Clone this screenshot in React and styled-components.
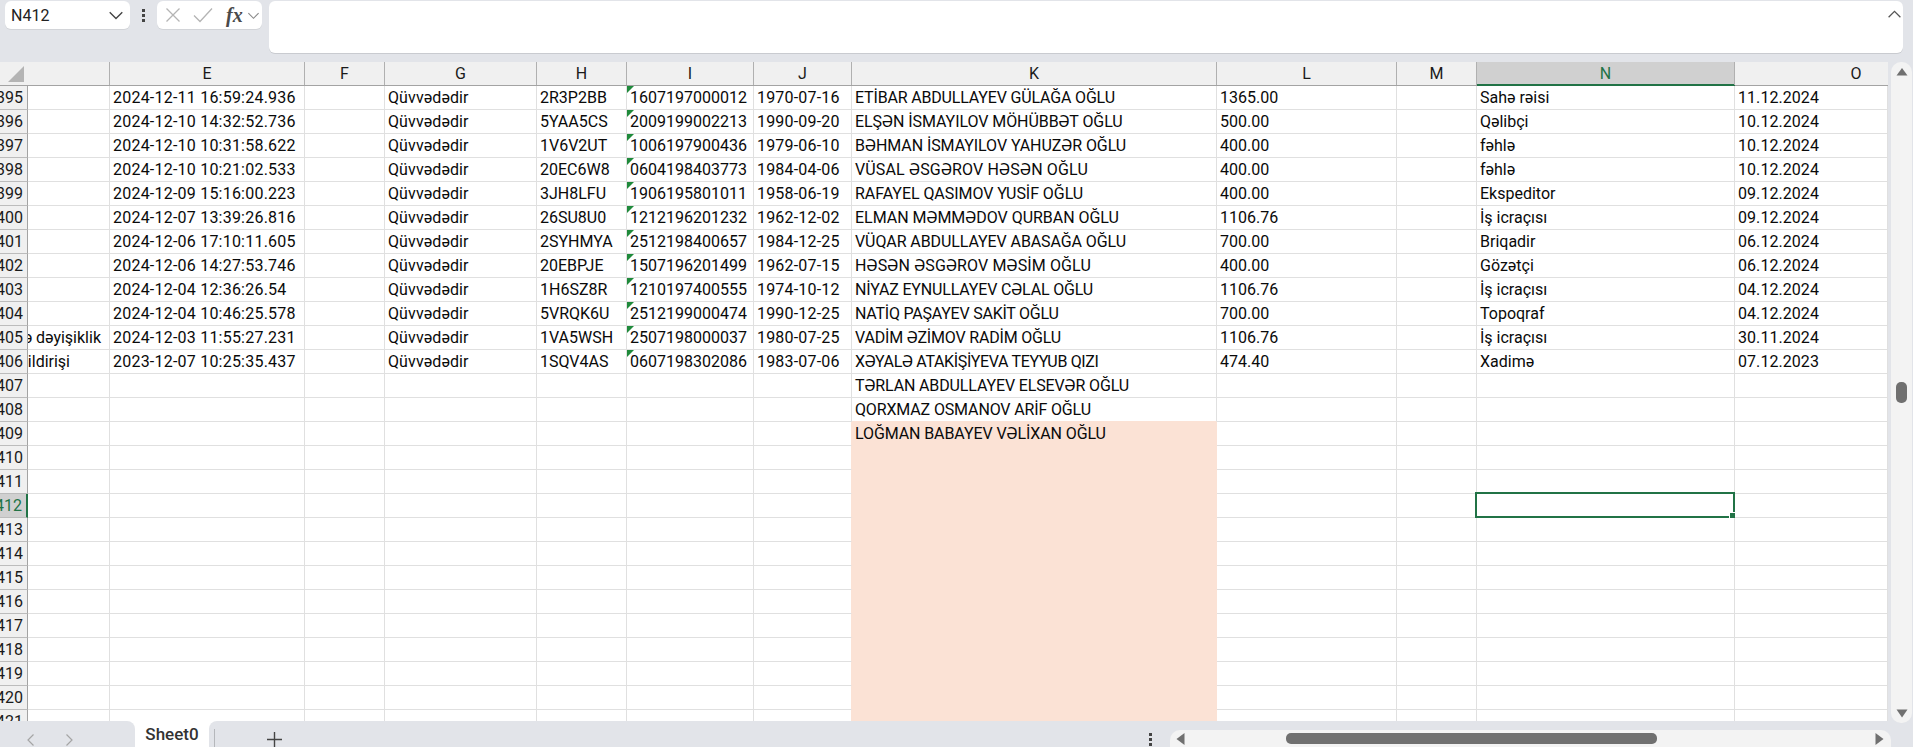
import React from "react";
import styled, { createGlobalStyle } from "styled-components";

const COLUMNS = "28px 82px 195px 80px 152px 90px 127px 98px 365px 180px 80px 258px 153px";
const CHROME = "#e2e4e9";
const GREEN = "#217346";
const PEACH = "#fbe2d5";
const GRIDLINE = "#e0e0e0";

const Global = createGlobalStyle`
  html, body { margin: 0; padding: 0; height: 100%; overflow: hidden; background: #fff; }
  * { box-sizing: border-box; }
`;

const Page = styled.div`
  width: 100vw;
  height: 100vh;
  display: flex;
  flex-direction: column;
  background: #fff;
  font-family: Roboto, "Liberation Sans", sans-serif;
  color: #0a0a0a;
  overflow: hidden;
`;

const FormulaBar = styled.div`
  height: 62px;
  flex: none;
  background: ${CHROME};
  display: flex;
  align-items: flex-start;
  padding: 1px 10px 0 5px;
`;
const NameBox = styled.div`
  width: 125px;
  height: 28px;
  background: #fff;
  border-radius: 6px;
  display: flex;
  align-items: center;
  justify-content: space-between;
  padding: 0 6px 0 6px;
  font-size: 16px;
  color: #222;
  box-shadow: 0 1px 0 #d2d4d8;
`;
const Dots = styled.div`
  width: 27px;
  height: 28px;
  display: flex;
  flex-direction: column;
  align-items: center;
  justify-content: center;
  gap: 2px;
`;
const Dot = styled.span`
  width: 3px;
  height: 3px;
  background: #444;
`;
const FxBox = styled.div`
  width: 105px;
  height: 28px;
  background: #fff;
  border-radius: 6px;
  display: flex;
  align-items: center;
  padding-left: 8px;
  box-shadow: 0 1px 0 #d2d4d8;
`;
const CheckIcon = styled.svg`
  flex: none;
  display: block;
  margin-left: 12px;
`;
const FxLabel = styled.span`
  font-family: "Liberation Serif", serif;
  font-style: italic;
  font-weight: 700;
  font-size: 20px;
  color: #4a4a4a;
  margin-left: 13px;
  margin-right: 4px;
`;
const FormulaInput = styled.div`
  margin-left: 7px;
  flex: 1;
  height: 52px;
  background: #fff;
  border-radius: 6px;
  box-shadow: 0 1px 0 #c9cbd0;
  display: flex;
  justify-content: flex-end;
  padding: 6px 1px 0 0;
`;
const Icon = styled.svg`
  flex: none;
  display: block;
`;

const SheetArea = styled.div`
  height: 659px;
  flex: none;
  display: flex;
  background: ${CHROME};
`;
const Grid = styled.div`
  width: 1888px;
  height: 659px;
  flex: none;
  background: #fff;
  overflow: hidden;
`;
const HeaderRow = styled.div`
  display: grid;
  grid-template-columns: 110px 195px 80px 152px 90px 127px 98px 365px 180px 80px 258px 153px;
  height: 24px;
  background: #f0f0f0;
  border-bottom: 1px solid #a3a3a3;
`;
const Corner = styled.div`
  border-right: 1px solid #b0b0b0;
  padding: 4px 0 0 8px;
`;
const ColHead = styled.div`
  display: flex;
  align-items: center;
  justify-content: center;
  font-size: 16px;
  padding-left: ${p => (p.$last ? 90 : 0)}px;
  color: ${p => (p.$active ? GREEN : "#1a1a1a")};
  background: ${p => (p.$active ? "#d0d0d0" : "transparent")};
  border-right: 1px solid ${p => (p.$last ? "transparent" : "#b0b0b0")};
  box-shadow: ${p => (p.$active ? `0 1px 0 ${GREEN}, inset 0 -1px 0 ${GREEN}` : "none")};
`;
const Row = styled.div`
  display: grid;
  grid-template-columns: ${COLUMNS};
  height: 24px;
`;
const RowHead = styled.div`
  display: flex;
  align-items: center;
  justify-content: flex-end;
  overflow: hidden;
  padding-right: 4px;
  font-size: 16px;
  color: ${p => (p.$active ? GREEN : "#1a1a1a")};
  background: ${p => (p.$active ? "#d0d0d0" : "#f0f0f0")};
  border-right: ${p => (p.$active ? `2px solid ${GREEN}` : "1px solid #a3a3a3")};
  border-bottom: 1px solid #bcbcbc;
  white-space: nowrap;
`;
const Cell = styled.div`
  position: relative;
  display: flex;
  align-items: center;
  padding-left: 3px;
  white-space: nowrap;
  font-size: 16px;
  color: #0a0a0a;
  letter-spacing: ${p => p.$spacing || 0}px;
  background: ${p => (p.$fill ? PEACH : "#fff")};
  border-right: 1px solid ${p => (p.$fill || p.$peachRight ? PEACH : GRIDLINE)};
  border-bottom: 1px solid ${p => (p.$fill || p.$peachBottom ? PEACH : GRIDLINE)};
`;
const ClippedCell = styled(Cell)`
  justify-content: flex-end;
  overflow: hidden;
  padding-left: 0;
  padding-right: ${p => p.$trail}px;
`;
const ErrorMark = styled.span`
  position: absolute;
  left: 0;
  top: 0;
  width: 0;
  height: 0;
  border-top: 7px solid #1f8a3b;
  border-right: 7px solid transparent;
`;
const Selection = styled.div`
  position: absolute;
  top: -2px;
  left: -2px;
  right: -1px;
  bottom: -1px;
  border: 2px solid ${GREEN};
`;
const FillHandle = styled.span`
  position: absolute;
  right: -3px;
  bottom: -3px;
  width: 7px;
  height: 7px;
  background: ${GREEN};
  border: 1px solid #fff;
  border-right-width: 0;
  border-bottom-width: 0;
`;

const VScroll = styled.div`
  width: 21px;
  height: 661px;
  margin-left: 3px;
  flex: none;
  position: relative;
  z-index: 1;
  background: #f3f3f3;
  border-radius: 10px;
  display: flex;
  flex-direction: column;
  align-items: center;
  padding-top: 6px;
`;
const VThumb = styled.div`
  width: 11px;
  height: 21px;
  margin-top: 306px;
  border-radius: 5px;
  background: #707070;
`;
const DownArrow = styled(Icon)`
  margin-top: auto;
  margin-bottom: 5px;
`;

const BottomBar = styled.div`
  height: 26px;
  flex: none;
  display: flex;
  background: #fff;
`;
const TabNav = styled.div`
  width: 135px;
  background: ${CHROME};
  border-top-right-radius: 8px;
  display: flex;
  align-items: flex-end;
  gap: 30px;
  padding: 0 0 0 26px;
`;
const Tab = styled.div`
  width: 74px;
  display: flex;
  align-items: center;
  justify-content: center;
  font-size: 17px;
  font-weight: 500;
  color: #333;
  padding-bottom: 1px;
`;
const TabRest = styled.div`
  flex: 1;
  background: ${CHROME};
  border-top-left-radius: 8px;
  display: flex;
  align-items: flex-end;
  padding-left: 5px;
`;
const TabDivider = styled.span`
  width: 1px;
  height: 18px;
  background: #b5b7bb;
`;
const AddSheet = styled(Icon)`
  margin-left: 52px;
  margin-bottom: 0;
`;
const BarDots = styled.div`
  margin-left: 866px;
  width: 5px;
  display: flex;
  flex-direction: column;
  align-items: center;
  gap: 2px;
  padding-bottom: 1px;
`;
const SmallDot = styled.span`
  width: 3px;
  height: 3px;
  background: #444;
`;
const HScroll = styled.div`
  margin-left: 17px;
  width: 721px;
  height: 17px;
  background: #f3f3f3;
  border-radius: 10px 10px 0 0;
  display: flex;
  align-items: center;
  padding: 0 7px 0 6px;
`;
const HThumb = styled.div`
  width: 371px;
  height: 11px;
  margin-left: 101px;
  margin-right: auto;
  border-radius: 5px;
  background: #707070;
`;

const HEADS = ["E", "F", "G", "H", "I", "J", "K", "L", "M", "N", "O"];

const DATA = {
  395: ["", "2024-12-11 16:59:24.936", "2R3P2BB", "1607197000012", "1970-07-16", "ETİBAR ABDULLAYEV GÜLAĞA OĞLU", "1365.00", "Sahə rəisi", "11.12.2024"],
  396: ["", "2024-12-10 14:32:52.736", "5YAA5CS", "2009199002213", "1990-09-20", "ELŞƏN İSMAYILOV MÖHÜBBƏT OĞLU", "500.00", "Qəlibçi", "10.12.2024"],
  397: ["", "2024-12-10 10:31:58.622", "1V6V2UT", "1006197900436", "1979-06-10", "BƏHMAN İSMAYILOV YAHUZƏR OĞLU", "400.00", "fəhlə", "10.12.2024"],
  398: ["", "2024-12-10 10:21:02.533", "20EC6W8", "0604198403773", "1984-04-06", "VÜSAL ƏSGƏROV HƏSƏN OĞLU", "400.00", "fəhlə", "10.12.2024"],
  399: ["", "2024-12-09 15:16:00.223", "3JH8LFU", "1906195801011", "1958-06-19", "RAFAYEL QASIMOV YUSİF OĞLU", "400.00", "Ekspeditor", "09.12.2024"],
  400: ["", "2024-12-07 13:39:26.816", "26SU8U0", "1212196201232", "1962-12-02", "ELMAN MƏMMƏDOV QURBAN OĞLU", "1106.76", "İş icraçısı", "09.12.2024"],
  401: ["", "2024-12-06 17:10:11.605", "2SYHMYA", "2512198400657", "1984-12-25", "VÜQAR ABDULLAYEV ABASAĞA OĞLU", "700.00", "Briqadir", "06.12.2024"],
  402: ["", "2024-12-06 14:27:53.746", "20EBPJE", "1507196201499", "1962-07-15", "HƏSƏN ƏSGƏROV MƏSİM OĞLU", "400.00", "Gözətçi", "06.12.2024"],
  403: ["", "2024-12-04 12:36:26.54", "1H6SZ8R", "1210197400555", "1974-10-12", "NİYAZ EYNULLAYEV CƏLAL OĞLU", "1106.76", "İş icraçısı", "04.12.2024"],
  404: ["", "2024-12-04 10:46:25.578", "5VRQK6U", "2512199000474", "1990-12-25", "NATİQ PAŞAYEV SAKİT OĞLU", "700.00", "Topoqraf", "04.12.2024"],
  405: ["dəyişiklik", "2024-12-03 11:55:27.231", "1VA5WSH", "2507198000037", "1980-07-25", "VADİM ƏZİMOV RADİM OĞLU", "1106.76", "İş icraçısı", "30.11.2024"],
  406: ["ildirişi", "2023-12-07 10:25:35.437", "1SQV4AS", "0607198302086", "1983-07-06", "XƏYALƏ ATAKİŞİYEVA TEYYUB QIZI", "474.40", "Xadimə", "07.12.2023"],
};
const EXTRA_NAMES = {
  407: "TƏRLAN ABDULLAYEV ELSEVƏR OĞLU",
  408: "QORXMAZ OSMANOV ARİF OĞLU",
  409: "LOĞMAN BABAYEV VƏLİXAN OĞLU",
};
const NAME_TRACKING = {
  395: -0.17, 396: -0.07, 397: -0.07, 398: 0.15, 399: -0.05, 400: -0.03, 401: -0.09, 402: 0.12,
  403: -0.17, 404: -0.23, 405: -0.18, 406: -0.34, 407: -0.14, 408: -0.14, 409: -0.1,
};
const ROW_NUMBERS = Array.from({ length: 27 }, (_, i) => 395 + i);
const FILL_FROM = 409;

function Chevron({ color = "#444", size = 14, up = false }) {
  return (
    <Icon width={size} height={size} viewBox="0 0 14 14" fill="none">
      <path d={up ? "M1.5 9.5 7 4l5.5 5.5" : "M1.5 4.5 7 10l5.5-5.5"} stroke={color} strokeWidth="1.2" />
    </Icon>
  );
}

function SheetRow({ n }) {
  const d = DATA[n];
  const name = d ? d[5] : EXTRA_NAMES[n] || "";
  const filled = n >= FILL_FROM;
  const active = n === 412;
  return (
    <Row>
      <RowHead $active={active}>{n}</RowHead>
      {n === 405 ? (
        <ClippedCell $trail={8}>ə {d[0]}</ClippedCell>
      ) : n === 406 ? (
        <ClippedCell $trail={39}>{d[0]}</ClippedCell>
      ) : (
        <Cell />
      )}
      <Cell $spacing={0.22}>{d && d[1]}</Cell>
      <Cell />
      <Cell $spacing={0.1}>{d && "Qüvvədədir"}</Cell>
      <Cell>{d && d[2]}</Cell>
      <Cell>
        {d && <ErrorMark />}
        {d && d[3]}
      </Cell>
      <Cell $peachRight={filled} $spacing={0.19}>{d && d[4]}</Cell>
      <Cell $fill={filled} $peachBottom={n === FILL_FROM - 1} $spacing={NAME_TRACKING[n]}>{name}</Cell>
      <Cell>{d && d[6]}</Cell>
      <Cell />
      <Cell>
        {d && d[7]}
        {active && (
          <Selection>
            <FillHandle />
          </Selection>
        )}
      </Cell>
      <Cell $spacing={0.06}>{d && d[8]}</Cell>
    </Row>
  );
}

export default function App() {
  return (
    <Page>
      <Global />
      <FormulaBar>
        <NameBox>
          N412
          <Chevron size={16} />
        </NameBox>
        <Dots>
          <Dot />
          <Dot />
          <Dot />
        </Dots>
        <FxBox>
          <Icon width="16" height="16" viewBox="0 0 16 16" fill="none">
            <path d="M1.5 1.5l13 13M14.5 1.5l-13 13" stroke="#b4b4b4" strokeWidth="1.3" />
          </Icon>
          <CheckIcon width="20" height="16" viewBox="0 0 20 16" fill="none">
            <path d="M1 8.5 7 14.5 19 1.5" stroke="#b4b4b4" strokeWidth="1.3" />
          </CheckIcon>
          <FxLabel>fx</FxLabel>
          <Chevron color="#8a8a8a" size={13} />
        </FxBox>
        <FormulaInput>
          <Chevron color="#555" size={15} up />
        </FormulaInput>
      </FormulaBar>

      <SheetArea>
        <Grid>
          <HeaderRow>
            <Corner>
              <Icon width="16" height="16" viewBox="0 0 16 16">
                <path d="M16 0v16H0z" fill="#b4b4b4" />
              </Icon>
            </Corner>
            {HEADS.map(h => (
              <ColHead key={h} $active={h === "N"} $last={h === "O"}>
                {h}
              </ColHead>
            ))}
          </HeaderRow>
          {ROW_NUMBERS.map(n => (
            <SheetRow key={n} n={n} />
          ))}
        </Grid>
        <VScroll>
          <Icon width="12" height="8" viewBox="0 0 12 8">
            <path d="M6 0l5.5 7.5H.5z" fill="#707070" />
          </Icon>
          <VThumb />
          <DownArrow width="12" height="9" viewBox="0 0 12 9">
            <path d="M.5 .5h11L6 8.5z" fill="#707070" />
          </DownArrow>
        </VScroll>
      </SheetArea>

      <BottomBar>
        <TabNav>
          <Icon width="9" height="14" viewBox="0 0 9 14" fill="none">
            <path d="M7.5 1.5 2 7l5.5 5.5" stroke="#a5a5a5" strokeWidth="1.2" />
          </Icon>
          <Icon width="9" height="14" viewBox="0 0 9 14" fill="none">
            <path d="M1.5 1.5 7 7l-5.5 5.5" stroke="#a5a5a5" strokeWidth="1.2" />
          </Icon>
        </TabNav>
        <Tab>Sheet0</Tab>
        <TabRest>
          <TabDivider />
          <AddSheet width="15" height="15" viewBox="0 0 15 15" fill="none">
            <path d="M7.5 0v15M0 7.5h15" stroke="#444" strokeWidth="1.4" />
          </AddSheet>
          <BarDots>
            <SmallDot />
            <SmallDot />
            <SmallDot />
          </BarDots>
          <HScroll>
            <Icon width="9" height="12" viewBox="0 0 9 12">
              <path d="M8.5 0v12L.5 6z" fill="#707070" />
            </Icon>
            <HThumb />
            <Icon width="9" height="12" viewBox="0 0 9 12">
              <path d="M.5 0v12l8-6z" fill="#707070" />
            </Icon>
          </HScroll>
        </TabRest>
      </BottomBar>
    </Page>
  );
}
